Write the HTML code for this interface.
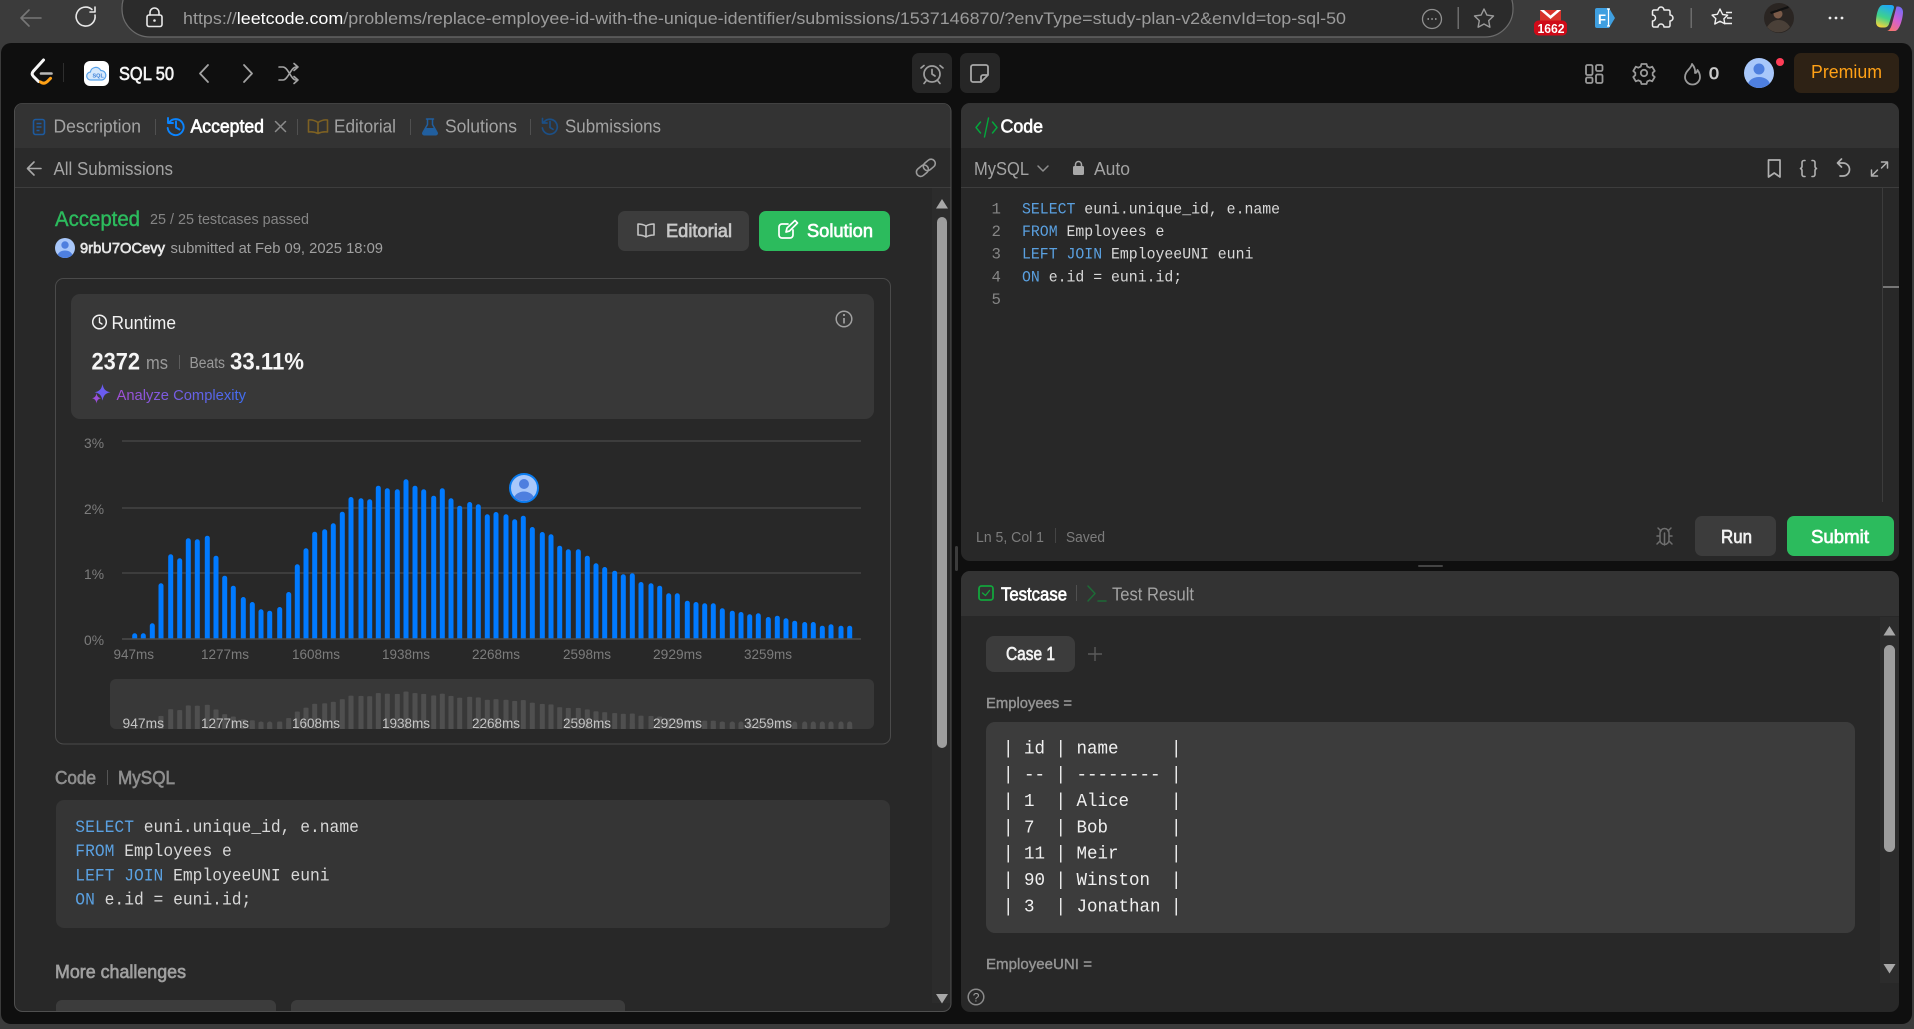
<!DOCTYPE html>
<html lang="en">
<head>
<meta charset="utf-8">
<title>Replace Employee ID With The Unique Identifier - Submission</title>
<style>
html,body{margin:0;padding:0;background:#3b3b3b;width:1914px;height:1029px;overflow:hidden}
svg{display:block;font-family:"Liberation Sans",Arial,sans-serif}
.mono{font-family:"Liberation Mono","DejaVu Sans Mono",monospace}
.tab{font-size:18px;fill:#a3a3a3}
.b{font-weight:700}
.sb{stroke-width:.65}
.ax{font-size:14px;fill:#7c7c7c}
.mi{font-size:14px;fill:#c4c4c4}
.ic{fill:none;stroke-linecap:round;stroke-linejoin:round}
</style>
</head>
<body>
<svg width="1914" height="1029" viewBox="0 0 1914 1029" xmlns="http://www.w3.org/2000/svg">
<defs>
<linearGradient id="ana" x1="0" x2="1" y1="0" y2="0"><stop offset="0" stop-color="#a24fd6"/><stop offset="1" stop-color="#3f6df0"/></linearGradient>
<linearGradient id="co1" x1="0.6" x2="0.3" y1="0" y2="1"><stop offset="0" stop-color="#1fa8f5"/><stop offset=".55" stop-color="#3fd28a"/><stop offset="1" stop-color="#f5d43c"/></linearGradient>
<linearGradient id="co2" x1="0.7" x2="0.2" y1="0" y2="1"><stop offset="0" stop-color="#7a6cf5"/><stop offset=".5" stop-color="#d45fd0"/><stop offset="1" stop-color="#f8786a"/></linearGradient>
<clipPath id="cMain"><rect x="110" y="440" width="760" height="199"/></clipPath>
<clipPath id="cMini"><rect x="110" y="679" width="764" height="50"/></clipPath>
<clipPath id="cMark"><circle cx="524" cy="488" r="13"/></clipPath>
<clipPath id="cAv"><circle cx="1759" cy="73" r="15"/></clipPath>
<clipPath id="cUs"><circle cx="65" cy="248" r="10"/></clipPath>
<path id="bars" d="M134.7 635.8V645M143.3 635.8V645M152.3 625.8V645M161 585.8V645M170.7 556.8V645M179.7 560.8V645M188.3 540.8V645M197.3 541.8V645M207.3 538.2V645M216 558.2V645M224.7 578.2V645M233.3 588.2V645M243.3 599.5V645M252.3 604.5V645M261 611.8V645M269.7 613.2V645M279.7 609.5V645M288.7 594.5V645M297.3 566.8V645M306 550.8V645M314.7 534.2V645M324.7 531.8V645M333.3 525.8V645M342.3 514.2V645M351 499.5V645M361 500.8V645M369.7 501.8V645M378.3 488.2V645M387.3 490.8V645M397.3 491.8V645M406 481.8V645M415 488.2V645M423.7 491.8V645M433.7 498.2V645M442.3 490.8V645M451 500.8V645M459.7 508.2V645M469.7 504.5V645M478.3 506.8V645M487.3 516.8V645M496 514.5V645M506 516.8V645M514.7 521.8V645M523.3 518.2V645M532.3 529.5V645M542.3 534.5V645M551 536.8V645M559.7 548.2V645M568.3 551.8V645M578.3 551.8V645M587.3 558.2V645M596 565.8V645M604.7 569.5V645M614.7 573.2V645M623.3 576.8V645M632.3 575.8V645M641 584.5V645M651 585.8V645M659.7 588.2V645M668.7 595.8V645M677.3 595.8V645M687.3 603.2V645M696 604.5V645M704.7 605.8V645M713.3 605.8V645M722.3 610.8V645M732.3 613.2V645M741 614.5V645M749.7 616.8V645M758.3 615.8V645M768.3 619.5V645M777.3 618.2V645M786 620.8V645M794.7 623.2V645M804.7 624.5V645M813.3 624.5V645M822.3 628.2V645M831 626.8V645M841 628.2V645M849.7 628.2V645"/>
</defs>

<!-- Browser chrome -->
<rect width="1914" height="1029" fill="#3b3b3b"/>
<rect x="122" y="-20" width="1391" height="57" rx="28" fill="#2b2b2b" stroke="#6b6b6b" stroke-width="1.2"/>
<path class="ic" d="M41 18H22M29 10l-8 8 8 8" stroke="#777" stroke-width="1.6"/>
<path class="ic" d="M95 15a9.5 9.5 0 1 1-3-5.5M95 7v5h-5" stroke="#e8e8e8" stroke-width="1.6"/>
<path class="ic" d="M150 15v-2.5a4.500 4.500 0 0 1 9 0V15" stroke="#e8e8e8" stroke-width="1.6"/>
<rect x="147" y="15" width="15" height="11.500" rx="2" fill="none" stroke="#e8e8e8" stroke-width="1.6"/>
<circle cx="154.500" cy="20.500" r="1.300" fill="#e8e8e8"/>
<text x="183" y="24" font-size="16.500" fill="#9b9b9b" textLength="1163" lengthAdjust="spacingAndGlyphs">https://<tspan fill="#fff">leetcode.com</tspan>/problems/replace-employee-id-with-the-unique-identifier/submissions/1537146870/?envType=study-plan-v2&amp;envId=top-sql-50</text>
<circle cx="1432" cy="19" r="9.500" fill="none" stroke="#909090" stroke-width="1.300"/>
<path d="M1427.500 19h1.500M1431.300 19h1.500M1435 19h1.500" stroke="#a8a8a8" stroke-width="1.600"/>
<rect x="1457.500" y="7" width="1.500" height="22" fill="#6c6c6c"/>
<path class="ic" d="M1484 9l2.900 6.100 6.600.9-4.800 4.600 1.200 6.600-5.900-3.200-5.900 3.200 1.200-6.600-4.800-4.600 6.600-.9z" stroke="#9a9a9a" stroke-width="1.400"/>
<rect x="1540" y="10" width="21" height="11" fill="#d8322a"/>
<path d="M1540 10h4l6.500 5.500L1557 10h4l-10.500 9z" fill="#fff"/>
<rect x="1534" y="20.500" width="33" height="15" rx="4.500" fill="#cf0a18"/>
<text x="1537.500" y="33" font-size="12.500" class="b" fill="#fff" textLength="27" lengthAdjust="spacingAndGlyphs">1662</text>
<path d="M1597 8h12l6 10-6 10h-12a2 2 0 0 1-2-2V10a2 2 0 0 1 2-2z" fill="#3f9fe0"/>
<text x="1598" y="24" font-size="14" class="b" fill="#fff" textLength="8" lengthAdjust="spacingAndGlyphs">F</text>
<path d="M1607 9h3M1607 26h3M1608.500 9v17" stroke="#fff" stroke-width="1.200" fill="none"/>
<path class="ic" d="M1652 11h4a3 3 0 0 1 6 0h4.500a1.500 1.500 0 0 1 1.500 1.500V16a3 3 0 0 1 0 6v4.500a1.500 1.500 0 0 1-1.500 1.500H1662a3 3 0 0 0-6 0h-4a1.500 1.500 0 0 1-1.500-1.500V22a3 3 0 0 0 0-6v-3.500a1.500 1.500 0 0 1 1.500-1.500z" stroke="#eee" stroke-width="1.500" transform="translate(2,-1)"/>
<rect x="1690.500" y="8" width="1.500" height="20" fill="#6c6c6c"/>
<path class="ic" d="M1720 9l2.600 5.500 5 .7-3.700 3.600.9 5-4.800-2.600-5.200 2.800 1-5.400-3.700-3.500 5.300-.8z" stroke="#f0f0f0" stroke-width="1.400" fill="none"/>
<path d="M1726 12.500h6M1727 18h5M1725 23.500h7" stroke="#f0f0f0" stroke-width="1.400"/>
<circle cx="1779" cy="18" r="15" fill="#2a2522"/>
<path d="M1767 27c4-6 8-7 12-7s8 2 11 7a15 15 0 0 1-23 0z" fill="#4a4038"/>
<circle cx="1778" cy="14" r="4.500" fill="#7a5a48"/>
<path d="M1770 12l18-6 1 2-18 6z" fill="#111"/>
<circle cx="1830" cy="18" r="1.400" fill="#eee"/><circle cx="1836" cy="18" r="1.400" fill="#eee"/><circle cx="1842" cy="18" r="1.400" fill="#eee"/>
<path d="M1883 5h8c2.500 0 3.500 1.500 2.800 3.500L1889 24c-.7 2-2.200 3.500-4.500 3.500h-3c-3.500 0-5.500-2-5.500-5.500 0-6 2-17 7-17z" fill="url(#co1)"/>
<path d="M1887 31h8c4.500 0 8-13 8-19 0-3-2-5.500-5-5.500h-1.500L1892 24c-.7 2.500-2.500 7-5 7z" fill="url(#co2)"/>

<!-- App surface -->
<rect x="1" y="43" width="1911" height="981" rx="10" fill="#0f0f0f"/>

<!-- Navbar -->
<path class="ic" d="M43.500 60L33.500 71c-1.800 2-1.800 3.700 0 5.500l5 5" stroke="#f6f6f6" stroke-width="3"/>
<path class="ic" d="M40.500 82c2.200 1.600 4.500 1.600 6.500-.2l3.500-3.500" stroke="#ffa116" stroke-width="3"/>
<path class="ic" d="M41 73.500h10.500" stroke="#b8b8b8" stroke-width="2.600"/>
<rect x="63" y="63" width="1" height="19" fill="#2e2e2e"/>
<rect x="84" y="61" width="25" height="25" rx="6" fill="#fff"/>
<path d="M91 80a4 4 0 0 1-.6-8 5.500 5.500 0 0 1 10.400-1.500A4.800 4.800 0 0 1 102 80z" fill="#d6e8fb" stroke="#58a3ec" stroke-width="1.200"/>
<text x="92.500" y="77.500" font-size="5.500" class="b" fill="#3f82d8">SQL</text>
<text class="sb" x="119" y="80" font-size="18" fill="#f5f5f5" stroke="#f5f5f5" textLength="55" lengthAdjust="spacingAndGlyphs">SQL 50</text>
<path class="ic" d="M208 65l-8 8.500 8 8.500" stroke="#a3a3a3" stroke-width="1.800"/>
<path class="ic" d="M244 65l8 8.500-8 8.500" stroke="#a3a3a3" stroke-width="1.800"/>
<path class="ic" d="M279 67h4c5 0 8 13 13 13h2M279 80h4c5 0 8-13 13-13h2M294 63.500l4 3.500-4 3.500M294 76.500l4 3.500-4 3.500" stroke="#a3a3a3" stroke-width="1.600"/>
<rect x="912" y="53" width="40" height="40" rx="7" fill="#262626"/>
<circle cx="932" cy="74" r="8" fill="none" stroke="#9e9e9e" stroke-width="1.700"/>
<path class="ic" d="M932 69.500V74l3 2M924 65.500l-3 2.500M940 65.500l3 2.500M926 81l-2 2.500M938 81l2 2.500" stroke="#9e9e9e" stroke-width="1.700"/>
<rect x="960" y="53" width="40" height="40" rx="7" fill="#262626"/>
<path class="ic" d="M973 65h13a2 2 0 0 1 2 2v8l-7 7h-8a2 2 0 0 1-2-2V67a2 2 0 0 1 2-2zM988 75h-5a2 2 0 0 0-2 2v5" stroke="#a8a8a8" stroke-width="1.800"/>
<g fill="none" stroke="#9a9a9a" stroke-width="1.800">
<rect x="1586" y="65" width="6.500" height="10" rx="1.500"/><rect x="1596" y="65" width="6.500" height="6" rx="1.500"/><rect x="1586" y="77.500" width="6.500" height="5.500" rx="1.500"/><rect x="1596" y="74.500" width="6.500" height="8.500" rx="1.500"/>
<circle cx="1644" cy="73" r="3.200"/>
<path stroke-linejoin="round" d="M1641.500 64h5l.8 2.600 2.400 1.100 2.500-1 2.500 4.300-2 1.800v2.400l2 1.800-2.500 4.300-2.500-1-2.400 1.100-.8 2.600h-5l-.8-2.600-2.400-1.100-2.500 1-2.500-4.300 2-1.800v-2.400l-2-1.800 2.500-4.300 2.500 1 2.400-1.100z"/>
<path stroke-linejoin="round" d="M1692 64c-1 5-7 7-7 13a7.500 7.500 0 0 0 15 0c0-3-1-5-2.500-7-.5 2-1.500 3-2.500 3 .5-3-.5-6-3-9z"/>
</g>
<text x="1709" y="79" font-size="17" fill="#c8c8c8" stroke="#c8c8c8" class="sb" textLength="10" lengthAdjust="spacingAndGlyphs">0</text>
<circle cx="1759" cy="73" r="15" fill="#a8c7fa"/>
<g clip-path="url(#cAv)" fill="#4e7fdf"><circle cx="1759" cy="69" r="5.500"/><ellipse cx="1759" cy="85" rx="11" ry="8"/></g>
<circle cx="1780" cy="62" r="4" fill="#ff3d57"/>
<rect x="1794" y="53" width="105" height="40" rx="7" fill="#2e2215"/>
<text x="1811" y="78" font-size="18" fill="#ffa116" textLength="71" lengthAdjust="spacingAndGlyphs">Premium</text>

<!-- Left panel -->
<rect x="14.500" y="103.500" width="936.500" height="908" rx="8" fill="#282828" stroke="#4f4f4f"/>
<path d="M15 148V111a7.500 7.500 0 0 1 7.500-7.500H943a7.500 7.500 0 0 1 7.500 7.500v37z" fill="#333"/>
<rect x="15" y="148" width="935.500" height="39" fill="#2a2a2a"/>
<rect x="15" y="187" width="935.500" height="1" fill="#3d3d3d"/>
<rect x="932" y="188" width="18.500" height="815" fill="#2c2c2c"/>

<rect x="33.500" y="119.500" width="11" height="15" rx="2" fill="none" stroke="#1d5a9e" stroke-width="1.600"/>
<path d="M36.500 123.500h5M36.500 127h5M36.500 130.500h3" stroke="#1d5a9e" stroke-width="1.400"/>
<text class="tab" x="53.500" y="132.500" textLength="87.500" lengthAdjust="spacingAndGlyphs">Description</text>
<rect x="155" y="119" width="1" height="16" fill="#505050"/>
<path class="ic" d="M169.500 122a8 8 0 1 1-1.800 6M168 118v5h5M176 121.500v6l3.500 2" stroke="#0a84ff" stroke-width="1.900"/>
<text class="sb" x="190.500" y="132.500" font-size="18" fill="#fff" stroke="#fff" textLength="73.500" lengthAdjust="spacingAndGlyphs">Accepted</text>
<path class="ic" d="M275.500 121.500l10 10M285.500 121.500l-10 10" stroke="#8c8c8c" stroke-width="1.500"/>
<rect x="297" y="119" width="1" height="16" fill="#505050"/>
<path class="ic" d="M318 122.500c-3-2-6-3-9.500-2.500v12c3.500-.5 6.500 0 9.500 1.500 3-1.500 6-2 9.500-1.500v-12c-3.500-.5-6.500.5-9.500 2.500zM318 122.500v11" stroke="#7d6123" stroke-width="1.600"/>
<text class="tab" x="334" y="132.500" textLength="62" lengthAdjust="spacingAndGlyphs">Editorial</text>
<rect x="410" y="119" width="1" height="16" fill="#505050"/>
<path class="ic" d="M426.500 119h7M427.500 119v5.500l-4.500 8a1.500 1.500 0 0 0 1.300 2.300h11.400a1.500 1.500 0 0 0 1.300-2.300l-4.500-8V119" stroke="#215f9f" stroke-width="1.500"/>
<path d="M425.500 128h9l3 6H423z" fill="#215f9f"/>
<text class="tab" x="445" y="132.500" textLength="72" lengthAdjust="spacingAndGlyphs">Solutions</text>
<rect x="530" y="119" width="1" height="16" fill="#505050"/>
<path class="ic" d="M544 122a7.500 7.500 0 1 1-1.600 6M542.500 118.500v4.500h4.500M550 121.500v6l3 1.800" stroke="#1c4f85" stroke-width="1.700"/>
<text class="tab" x="565" y="132.500" textLength="96" lengthAdjust="spacingAndGlyphs">Submissions</text>

<path class="ic" d="M41 168.500H28M34 162l-6.500 6.500L34 175" stroke="#a8a8a8" stroke-width="1.600"/>
<text class="tab" x="53.500" y="175" textLength="119.500" lengthAdjust="spacingAndGlyphs">All Submissions</text>
<g transform="rotate(-40 926 168)" fill="none" stroke="#9a9a9a" stroke-width="1.600"><rect x="915" y="163.500" width="13" height="8.500" rx="4.200"/><rect x="924" y="163.500" width="13" height="8.500" rx="4.200"/></g>

<!-- Left scrollbar -->
<path d="M942 199l6 9.500h-12z" fill="#a8a8a8"/>
<rect x="937" y="217" width="10" height="531" rx="5" fill="#9e9e9e"/>
<path d="M942 1003.500l6-9.500h-12z" fill="#a8a8a8"/>

<!-- Result header -->
<text class="sb" x="55" y="226" font-size="21" fill="#2cbb5d" stroke="#2cbb5d" style="stroke-width:.4" textLength="85" lengthAdjust="spacingAndGlyphs">Accepted</text>
<text x="150" y="224" font-size="15" fill="#858585" textLength="159" lengthAdjust="spacingAndGlyphs">25 / 25 testcases passed</text>
<circle cx="65" cy="248" r="10" fill="#a8c7fa"/>
<g clip-path="url(#cUs)" fill="#4e7fdf"><circle cx="65" cy="245" r="3.700"/><ellipse cx="65" cy="256" rx="7.500" ry="5.500"/></g>
<text class="sb" x="80" y="253" font-size="15" fill="#e6e6e6" stroke="#e6e6e6" textLength="85" lengthAdjust="spacingAndGlyphs">9rbU7OCevy</text>
<text x="170.500" y="253" font-size="15" fill="#a0a0a0" textLength="212.500" lengthAdjust="spacingAndGlyphs">submitted at Feb 09, 2025 18:09</text>
<rect x="618" y="211" width="131" height="40" rx="7" fill="#3c3c3c"/>
<path class="ic" d="M646 226c-2.500-1.500-5-2-8-2v11c3 0 5.500.5 8 2 2.500-1.500 5-2 8-2v-11c-3 0-5.500.500-8 2zM646 226v11" stroke="#c4c4c4" stroke-width="1.600"/>
<text class="sb" x="666" y="237" font-size="18" fill="#c8c8c8" stroke="#c8c8c8" textLength="66" lengthAdjust="spacingAndGlyphs">Editorial</text>
<rect x="759" y="211" width="131" height="40" rx="7" fill="#2cbb5d"/>
<path class="ic" d="M788 224h-6a3 3 0 0 0-3 3v8a3 3 0 0 0 3 3h8a3 3 0 0 0 3-3v-5M786 232l1-4 8-7.500 2.500 2.500-8 8z" stroke="#fff" stroke-width="1.700"/>
<text class="sb" x="807" y="237" font-size="18" fill="#fff" stroke="#fff" textLength="66" lengthAdjust="spacingAndGlyphs">Solution</text>

<!-- Runtime card -->
<rect x="55.500" y="278.500" width="835" height="465.500" rx="8" fill="none" stroke="#4a4a4a"/>
<rect x="71" y="294" width="803" height="125" rx="9" fill="#383838"/>
<circle cx="99.500" cy="322" r="6.800" fill="none" stroke="#f2f2f2" stroke-width="1.500"/>
<path class="ic" d="M99.500 318v4.500l2.500 1.500" stroke="#f2f2f2" stroke-width="1.400"/>
<text x="111.500" y="329" font-size="18" fill="#f2f2f2" textLength="64.500" lengthAdjust="spacingAndGlyphs">Runtime</text>
<text x="91.500" y="369.500" font-size="24" class="b" fill="#f5f5f5" textLength="48.500" lengthAdjust="spacingAndGlyphs">2372</text>
<text x="146" y="369" font-size="18" fill="#9a9a9a" textLength="22" lengthAdjust="spacingAndGlyphs">ms</text>
<rect x="179" y="355" width="1" height="14" fill="#5c5c5c"/>
<text x="189.500" y="368" font-size="15.500" fill="#9a9a9a" textLength="35.500" lengthAdjust="spacingAndGlyphs">Beats</text>
<text x="230" y="369.500" font-size="24" class="b" fill="#f5f5f5" textLength="74" lengthAdjust="spacingAndGlyphs">33.11%</text>
<path d="M102.500 384c1 5.300 3 7.300 8 8.300-5 1-7 3-8 8.300-1-5.300-3-7.300-8-8.300 5-1 7-3 8-8.300z" fill="#6a5cf0"/>
<path d="M96.500 393c.5 3.300 1.700 4.700 4.500 5.300-2.800.6-4 2-4.500 5.300-.5-3.300-1.700-4.700-4.500-5.300 2.800-.6 4-2 4.500-5.300z" fill="#9b4fd9"/>
<text x="116.500" y="400" font-size="15" fill="url(#ana)" textLength="129.500" lengthAdjust="spacingAndGlyphs">Analyze Complexity</text>
<circle cx="844" cy="319" r="7.800" fill="none" stroke="#a0a0a0" stroke-width="1.500"/>
<path d="M844 318v5.500" stroke="#a0a0a0" stroke-width="1.700"/><circle cx="844" cy="315" r="1.100" fill="#a0a0a0"/>

<!-- Chart -->
<path d="M122 441H861M122 508H861M122 573H861" stroke="#444" stroke-width="1.500"/>
<text class="ax" x="84" y="448" textLength="20" lengthAdjust="spacingAndGlyphs">3%</text>
<text class="ax" x="84" y="514" textLength="20" lengthAdjust="spacingAndGlyphs">2%</text>
<text class="ax" x="84" y="579" textLength="20" lengthAdjust="spacingAndGlyphs">1%</text>
<text class="ax" x="84" y="645" textLength="20" lengthAdjust="spacingAndGlyphs">0%</text>
<g clip-path="url(#cMain)"><use href="#bars" fill="none" stroke="#007aff" stroke-width="5" stroke-linecap="round"/></g>
<path d="M122 639H861" stroke="#4c4c4c" stroke-width="1.500"/>
<circle cx="524" cy="488" r="14" fill="#a8c7fa" stroke="#0a7cf0" stroke-width="2"/>
<g clip-path="url(#cMark)" fill="#4e7fdf"><circle cx="524" cy="484" r="5"/><ellipse cx="524" cy="499" rx="10" ry="7.500"/></g>
<text class="ax" x="113.500" y="659" textLength="40.500" lengthAdjust="spacingAndGlyphs">947ms</text>
<text class="ax" x="201" y="659" textLength="48" lengthAdjust="spacingAndGlyphs">1277ms</text>
<text class="ax" x="292" y="659" textLength="48" lengthAdjust="spacingAndGlyphs">1608ms</text>
<text class="ax" x="382" y="659" textLength="48" lengthAdjust="spacingAndGlyphs">1938ms</text>
<text class="ax" x="472" y="659" textLength="48" lengthAdjust="spacingAndGlyphs">2268ms</text>
<text class="ax" x="563" y="659" textLength="48" lengthAdjust="spacingAndGlyphs">2598ms</text>
<text class="ax" x="653" y="659" textLength="49" lengthAdjust="spacingAndGlyphs">2929ms</text>
<text class="ax" x="744" y="659" textLength="48" lengthAdjust="spacingAndGlyphs">3259ms</text>

<!-- Mini chart -->
<rect x="110" y="679" width="764" height="50" rx="6" fill="#383838"/>
<g clip-path="url(#cMini)">
<use href="#bars" transform="translate(0 729) scale(1 .235) translate(0 -639)" fill="none" stroke="#4f4f4f" stroke-width="5" stroke-linecap="round"/>
<path fill="none" stroke="#4f4f4f" stroke-width="5" stroke-linecap="round" d="M243.300 724V735M252.300 724V735M261 724V735M269.700 724V735M279.700 724V735M288.700 724V735M632.300 724V735M641 724V735M651 724V735M659.700 724V735M668.700 724V735M677.300 724V735M687.300 724V735M696 724V735M704.700 724V735M713.300 724V735M722.300 724V735M732.300 724V735M741 724V735M749.700 724V735M758.300 724V735M768.300 724V735M777.300 724V735M786 724V735M794.700 724V735M804.700 724V735M813.300 724V735M822.300 724V735M831 724V735M841 724V735M849.700 724V735"/>
</g>
<text class="mi" x="122.500" y="728" textLength="41.500" lengthAdjust="spacingAndGlyphs">947ms</text>
<text class="mi" x="201" y="728" textLength="48" lengthAdjust="spacingAndGlyphs">1277ms</text>
<text class="mi" x="292" y="728" textLength="48" lengthAdjust="spacingAndGlyphs">1608ms</text>
<text class="mi" x="382" y="728" textLength="48" lengthAdjust="spacingAndGlyphs">1938ms</text>
<text class="mi" x="472" y="728" textLength="48" lengthAdjust="spacingAndGlyphs">2268ms</text>
<text class="mi" x="563" y="728" textLength="48" lengthAdjust="spacingAndGlyphs">2598ms</text>
<text class="mi" x="653" y="728" textLength="49" lengthAdjust="spacingAndGlyphs">2929ms</text>
<text class="mi" x="744" y="728" textLength="48" lengthAdjust="spacingAndGlyphs">3259ms</text>

<!-- Code section -->
<text class="sb" x="55" y="784" font-size="18" fill="#8e8e8e" stroke="#8e8e8e" textLength="41" lengthAdjust="spacingAndGlyphs">Code</text>
<rect x="107" y="770" width="1" height="15" fill="#555"/>
<text class="sb" x="118" y="784" font-size="18" fill="#8e8e8e" stroke="#8e8e8e" textLength="57" lengthAdjust="spacingAndGlyphs">MySQL</text>
<rect x="56" y="800" width="834" height="128" rx="8" fill="#353535"/>
<g class="mono" font-size="17.200" fill="#d8d8d8">
<text x="75.300" y="832" textLength="283.600" lengthAdjust="spacingAndGlyphs"><tspan fill="#5aa0e0">SELECT</tspan> euni.unique_id, e.name</text>
<text x="75.300" y="856" textLength="156.500" lengthAdjust="spacingAndGlyphs"><tspan fill="#5aa0e0">FROM</tspan> Employees e</text>
<text x="75.300" y="880.500" textLength="254.300" lengthAdjust="spacingAndGlyphs"><tspan fill="#5aa0e0">LEFT JOIN</tspan> EmployeeUNI euni</text>
<text x="75.300" y="904.500" textLength="176" lengthAdjust="spacingAndGlyphs"><tspan fill="#5aa0e0">ON</tspan> e.id = euni.id;</text>
</g>
<text class="sb" x="55" y="978" font-size="18" fill="#a0a0a0" stroke="#a0a0a0" textLength="131" lengthAdjust="spacingAndGlyphs">More challenges</text>
<path d="M56 1011v-5a6 6 0 0 1 6-6h208a6 6 0 0 1 6 6v5zM291 1011v-5a6 6 0 0 1 6-6h322a6 6 0 0 1 6 6v5z" fill="#3c3c3c"/>

<!-- Right top panel -->
<rect x="961" y="103" width="938" height="458" rx="9" fill="#282828"/>
<path d="M961 148v-36a9 9 0 0 1 9-9h920a9 9 0 0 1 9 9v36z" fill="#333"/>
<rect x="961" y="187" width="938" height="1" fill="#3d3d3d"/>
<path class="ic" d="M980.500 122l-4.500 5.500 4.500 5.500M992.500 122l4.500 5.500-4.500 5.500M988.500 118l-4 19" stroke="#02a93c" stroke-width="1.400"/>
<text class="sb" x="1000.500" y="132.500" font-size="18" fill="#fff" stroke="#fff" textLength="42.500" lengthAdjust="spacingAndGlyphs">Code</text>
<text class="tab" x="974" y="175" textLength="55" lengthAdjust="spacingAndGlyphs">MySQL</text>
<path class="ic" d="M1038 166l5 5 5-5" stroke="#8e8e8e" stroke-width="1.500"/>
<rect x="1073" y="166" width="11" height="9" rx="1.500" fill="#a8a8a8"/>
<path class="ic" d="M1075.500 166v-1.500a3 3 0 0 1 6 0V166" stroke="#a8a8a8" stroke-width="1.500"/>
<text class="tab" x="1094" y="175" textLength="36" lengthAdjust="spacingAndGlyphs">Auto</text>
<path class="ic" d="M1768.500 160h11.500v17l-5.750-4-5.750 4z" stroke="#b0b0b0" stroke-width="1.700"/>
<path class="ic" d="M1805 160.500h-1a2 2 0 0 0-2 2v3.500a2.500 2.500 0 0 1-1.500 2.500 2.500 2.500 0 0 1 1.500 2.500v3.500a2 2 0 0 0 2 2h1M1812 160.500h1a2 2 0 0 1 2 2v3.500a2.500 2.500 0 0 0 1.500 2.500 2.500 2.500 0 0 0-1.500 2.500v3.500a2 2 0 0 1-2 2h-1" stroke="#b0b0b0" stroke-width="1.600"/>
<path class="ic" d="M1838.500 163h4.500a6.500 6.500 0 0 1 0 13h-3M1841.500 159l-4 4 4 4" stroke="#b0b0b0" stroke-width="1.700"/>
<path class="ic" d="M1881.500 162h6v6M1887.500 162l-6 6M1877.500 176h-6v-6M1871.500 176l6-6" stroke="#b0b0b0" stroke-width="1.500"/>

<g class="mono" font-size="15.700">
<g fill="#858585">
<text x="991.500" y="213.500">1</text><text x="991.500" y="236">2</text><text x="991.500" y="258.500">3</text><text x="991.500" y="281.500">4</text><text x="991.500" y="304">5</text>
</g>
<g fill="#d8d8d8">
<text x="1022" y="213.500" textLength="258.100" lengthAdjust="spacingAndGlyphs"><tspan fill="#5aa0e0">SELECT</tspan> euni.unique_id, e.name</text>
<text x="1022" y="236" textLength="142.400" lengthAdjust="spacingAndGlyphs"><tspan fill="#5aa0e0">FROM</tspan> Employees e</text>
<text x="1022" y="258.500" textLength="231.400" lengthAdjust="spacingAndGlyphs"><tspan fill="#5aa0e0">LEFT JOIN</tspan> EmployeeUNI euni</text>
<text x="1022" y="281.500" textLength="160.200" lengthAdjust="spacingAndGlyphs"><tspan fill="#5aa0e0">ON</tspan> e.id = euni.id;</text>
</g>
</g>
<rect x="1882" y="188" width="1" height="314" fill="#3c3c3c"/>
<rect x="1883" y="286" width="16" height="2" fill="#777"/>

<text x="976" y="542" font-size="15" fill="#7c7c7c" textLength="68" lengthAdjust="spacingAndGlyphs">Ln 5, Col 1</text>
<rect x="1055" y="528" width="1" height="15" fill="#444"/>
<text x="1066" y="542" font-size="15" fill="#7c7c7c" textLength="39" lengthAdjust="spacingAndGlyphs">Saved</text>
<path class="ic" d="M1660 533a4.500 4.500 0 0 1 9 0v7a4.500 4.500 0 0 1-9 0zM1664.500 533v12M1660 536h-3M1669 536h3M1660 541l-3 3M1669 541l3 3M1661 531l-3-3M1668 531l3-3" stroke="#6e6e6e" stroke-width="1.500"/>
<rect x="1695" y="516" width="81" height="40" rx="7" fill="#3c3c3c"/>
<text class="sb" x="1721" y="543" font-size="18" fill="#f2f2f2" stroke="#f2f2f2" textLength="31" lengthAdjust="spacingAndGlyphs">Run</text>
<rect x="1787" y="516" width="107" height="40" rx="7" fill="#2cbb5d"/>
<text class="sb" x="1811" y="543" font-size="18" fill="#fff" stroke="#fff" textLength="58" lengthAdjust="spacingAndGlyphs">Submit</text>

<rect x="1418" y="565" width="25" height="2" rx="1" fill="#444"/>
<rect x="955" y="546" width="3" height="25" rx="1.500" fill="#3c3c3c"/>

<!-- Right bottom panel -->
<rect x="961" y="571" width="938" height="441" rx="9" fill="#282828"/>
<path d="M961 616v-36a9 9 0 0 1 9-9h920a9 9 0 0 1 9 9v36z" fill="#333"/>
<rect x="979" y="586" width="14" height="14" rx="2.500" fill="none" stroke="#12a53c" stroke-width="1.800"/>
<path class="ic" d="M982.500 593l3 2.500 4-5" stroke="#12a53c" stroke-width="1.400"/>
<text class="sb" x="1001" y="600.500" font-size="18" fill="#fff" stroke="#fff" textLength="66" lengthAdjust="spacingAndGlyphs">Testcase</text>
<rect x="1076" y="585" width="1" height="16" fill="#505050"/>
<path class="ic" d="M1088 586l7 7.500-7 7.500M1098 601h8" stroke="#1d6b36" stroke-width="1.500"/>
<text class="tab" x="1112" y="600.500" textLength="82" lengthAdjust="spacingAndGlyphs">Test Result</text>

<rect x="1880" y="617" width="19" height="366" fill="#2c2c2c"/>
<path d="M1889.500 626l6 9.500h-12z" fill="#a8a8a8"/>
<rect x="1884" y="645" width="11" height="207" rx="5.500" fill="#9e9e9e"/>
<path d="M1889.500 973.500l6-9.500h-12z" fill="#a8a8a8"/>

<rect x="986" y="636" width="89" height="36" rx="8" fill="#3c3c3c"/>
<text class="sb" x="1006" y="660" font-size="18" fill="#f2f2f2" stroke="#f2f2f2" textLength="49" lengthAdjust="spacingAndGlyphs">Case 1</text>
<path d="M1095 647v14M1088 654h14" stroke="#5a5a5a" stroke-width="1.400"/>
<text class="sb" x="986" y="708" font-size="15" fill="#949494" stroke="#949494" style="stroke-width:.4" textLength="86" lengthAdjust="spacingAndGlyphs">Employees =</text>
<rect x="986" y="722" width="869" height="211" rx="9" fill="#3c3c3c"/>
<g class="mono" font-size="18.500" fill="#f0f0f0" style="white-space:pre">
<text x="1003" y="753.300" textLength="178.500" lengthAdjust="spacingAndGlyphs" xml:space="preserve">| id | name     |</text>
<text x="1003" y="779.600" textLength="178.500" lengthAdjust="spacingAndGlyphs" xml:space="preserve">| -- | -------- |</text>
<text x="1003" y="805.900" textLength="178.500" lengthAdjust="spacingAndGlyphs" xml:space="preserve">| 1  | Alice    |</text>
<text x="1003" y="832.300" textLength="178.500" lengthAdjust="spacingAndGlyphs" xml:space="preserve">| 7  | Bob      |</text>
<text x="1003" y="858.600" textLength="178.500" lengthAdjust="spacingAndGlyphs" xml:space="preserve">| 11 | Meir     |</text>
<text x="1003" y="884.900" textLength="178.500" lengthAdjust="spacingAndGlyphs" xml:space="preserve">| 90 | Winston  |</text>
<text x="1003" y="911.300" textLength="178.500" lengthAdjust="spacingAndGlyphs" xml:space="preserve">| 3  | Jonathan |</text>
</g>
<text class="sb" x="986" y="969" font-size="15" fill="#949494" stroke="#949494" style="stroke-width:.4" textLength="106" lengthAdjust="spacingAndGlyphs">EmployeeUNI =</text>
<circle cx="976" cy="997" r="7.800" fill="none" stroke="#8a8a8a" stroke-width="1.500"/>
<text x="972.800" y="1001.500" font-size="12" fill="#a0a0a0">?</text>
</svg>
</body>
</html>
